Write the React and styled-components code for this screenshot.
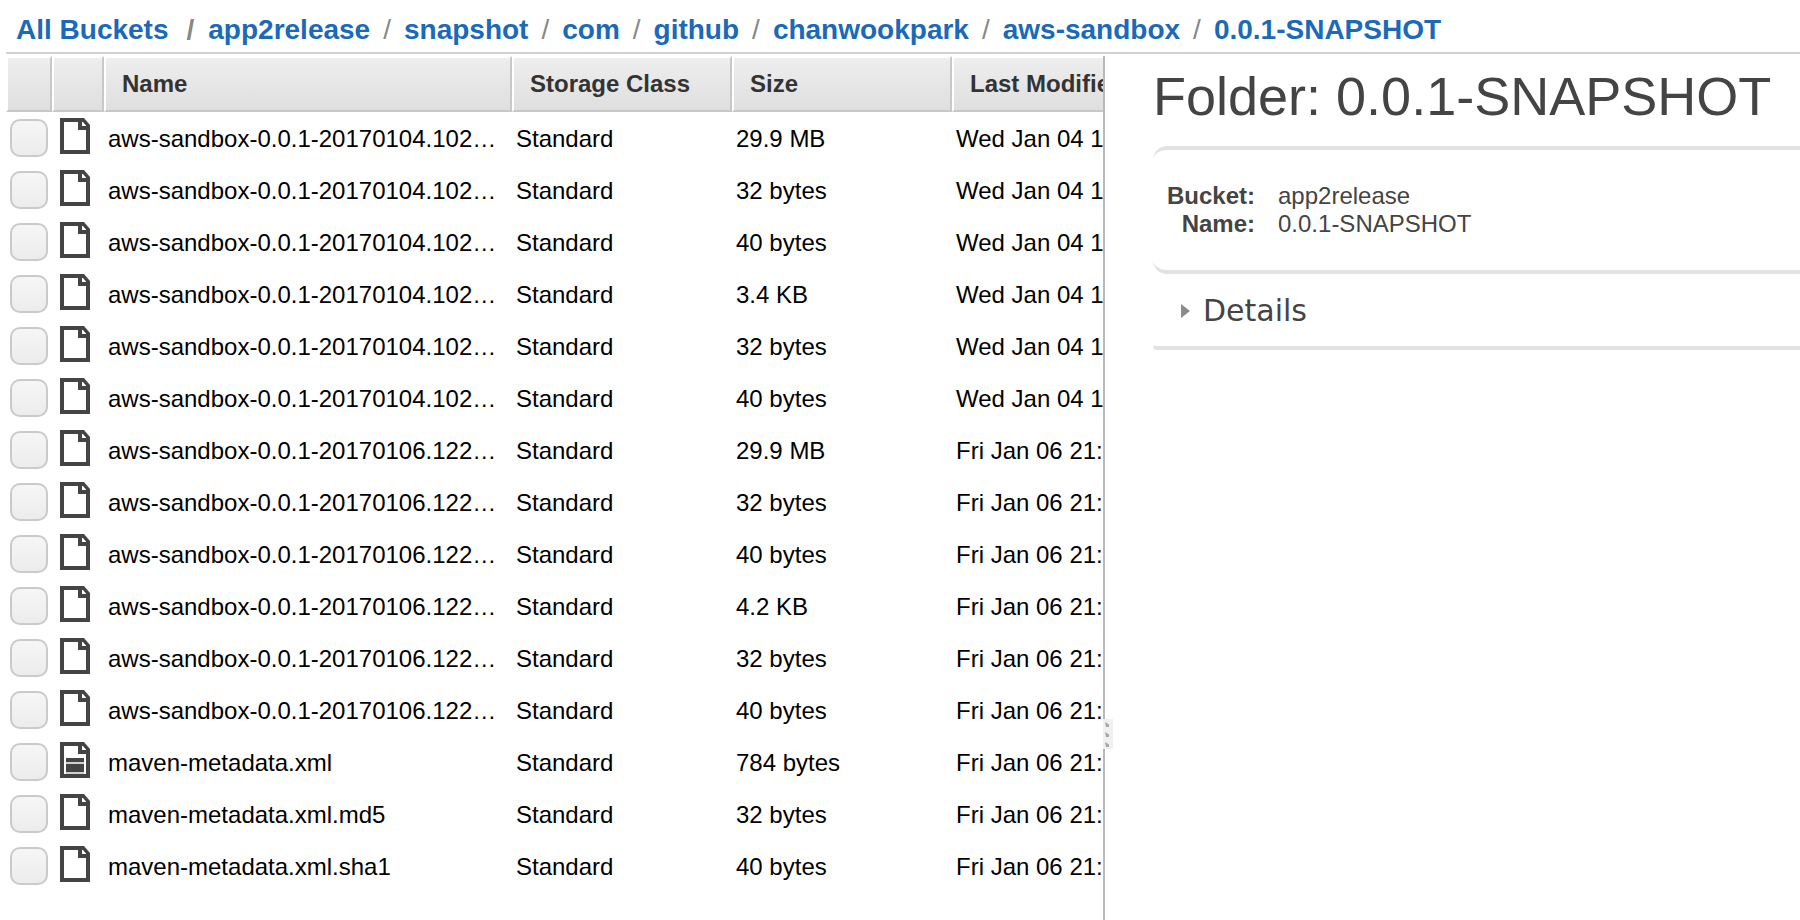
import React from "react";
import styled, { createGlobalStyle } from "styled-components";

const GlobalStyle = createGlobalStyle`
  * { box-sizing: border-box; }
  body {
    margin: 0;
    background: #fff;
    color: #444;
    font: 24px/28px "Liberation Sans", Arial, sans-serif;
  }
`;

const Page = styled.div`
  display: flex;
  flex-direction: column;
  min-height: 100vh;
`;

const Breadcrumb = styled.nav`
  margin-left: 6px;
  padding: 14px 10px 6px;
  border-bottom: 2px solid #d2d2d2;
  font-size: 28px;
  line-height: 32px;
`;

const Trail = styled.ol`
  display: flex;
  flex-wrap: wrap;
  margin: 0;
  padding: 0;
  list-style: none;
`;

const Crumb = styled.li`
  display: flex;
  white-space: nowrap;
`;

const Separator = styled.span`
  padding: 0 ${(p) => (p.$wide ? "14px 0 18px" : "13px")};
  color: #888;
  font-weight: ${(p) => (p.$wide ? "bold" : "normal")};
`;

const CrumbLink = styled.a`
  color: #1b69b9;
  font-weight: bold;
  text-decoration: none;
`;

const Panes = styled.main`
  flex: 1;
  display: grid;
  grid-template-columns: minmax(0, 1103fr) 2px minmax(0, 695fr);
  padding-top: 2px;
`;

const ListPane = styled.section`
  overflow: hidden;
  padding-left: 6px;
`;

const Splitter = styled.div`
  position: relative;
  background: #b8b8b8;
`;

const Grip = styled.div`
  position: absolute;
  top: 663px;
  left: 0;
  width: 10px;
  height: 30px;
  background: #f0f0f0;
  svg { display: block; }
`;

const Table = styled.table`
  width: 1167px;
  table-layout: fixed;
  border-collapse: separate;
  border-spacing: 0;
  color: #000;
`;

const Col = styled.col`
  width: ${(p) => p.$width}px;
`;

const Th = styled.th`
  height: 56px;
  padding: 0 16px;
  border-style: solid;
  border-width: 2px;
  border-color: #fff #c8c8c8 #c8c8c8 #fff;
  background: linear-gradient(#eee, #dfdfdf) padding-box;
  color: #333;
  text-align: left;
  white-space: nowrap;
`;

const Td = styled.td`
  height: 52px;
  padding: 2px 4px 0;
  overflow: hidden;
  text-overflow: ellipsis;
  white-space: nowrap;
`;

const ControlTd = styled.td`
  height: 52px;
  padding: 0 0 0 ${(p) => p.$left}px;
  vertical-align: top;
`;

const Checkbox = styled.input`
  appearance: none;
  display: block;
  width: 38px;
  height: 38px;
  margin: 7px 0 0;
  border: 2px solid #cacaca;
  border-radius: 10px;
  background: linear-gradient(#f6f6f6, #ececec);
`;

const IconSvg = styled.svg`
  display: block;
  width: 31px;
  height: 36px;
  margin-top: 6px;
`;

const DetailPane = styled.section`
  padding-left: 48px;
`;

const Title = styled.h1`
  margin: 0;
  padding: 9px 0 19px;
  font-size: 54px;
  font-weight: normal;
  line-height: 62px;
  white-space: nowrap;
`;

const Card = styled.div`
  padding: 32px 14px;
  border: solid #e2e2e2;
  border-width: 4px 0;
  border-radius: 14px 0 0 14px;
`;

const Facts = styled.dl`
  display: grid;
  grid-template-columns: 88px 1fr;
  column-gap: 23px;
  margin: 0;
`;

const Term = styled.dt`
  font-weight: bold;
  text-align: right;
`;

const Value = styled.dd`
  margin: 0;
`;

const DetailsBar = styled.div`
  padding: 19px 0 17px;
  border-bottom: 4px solid #e2e2e2;
  border-bottom-left-radius: 4px;
`;

const DetailsButton = styled.button`
  display: flex;
  align-items: center;
  gap: 13px;
  padding: 0 0 0 28px;
  border: 0;
  background: none;
  color: #444;
  font: 30px/36px "DejaVu Sans", sans-serif;
`;

const crumbs = ["All Buckets", "app2release", "snapshot", "com", "github", "chanwookpark", "aws-sandbox", "0.0.1-SNAPSHOT"];

const jan4 = "aws-sandbox-0.0.1-20170104.102…";
const jan6 = "aws-sandbox-0.0.1-20170106.122…";
const wed = "Wed Jan 04 19:25:34";
const fri = "Fri Jan 06 21:21:24";

const files = [
  { name: jan4, size: "29.9 MB", modified: wed },
  { name: jan4, size: "32 bytes", modified: wed },
  { name: jan4, size: "40 bytes", modified: wed },
  { name: jan4, size: "3.4 KB", modified: wed },
  { name: jan4, size: "32 bytes", modified: wed },
  { name: jan4, size: "40 bytes", modified: wed },
  { name: jan6, size: "29.9 MB", modified: fri },
  { name: jan6, size: "32 bytes", modified: fri },
  { name: jan6, size: "40 bytes", modified: fri },
  { name: jan6, size: "4.2 KB", modified: fri },
  { name: jan6, size: "32 bytes", modified: fri },
  { name: jan6, size: "40 bytes", modified: fri },
  { name: "maven-metadata.xml", size: "784 bytes", modified: fri, text: true },
  { name: "maven-metadata.xml.md5", size: "32 bytes", modified: fri },
  { name: "maven-metadata.xml.sha1", size: "40 bytes", modified: fri },
];

function FileIcon({ text }) {
  return (
    <IconSvg viewBox="0 0 31 36" aria-hidden="true">
      <path
        fill="#444"
        fillRule="evenodd"
        d="M0 0H24L30 7V36H0ZM4 4V32H26V12H18V4ZM22 4V8H26V7.500L23 4Z"
      />
      {text && (
        <>
          <path fill="#d0d0d0" d="M6 20H24V22H6ZM6 30H24V32H6Z" />
          <path fill="#444" d="M6 16H24V20H6ZM6 22H24V30H6Z" />
        </>
      )}
    </IconSvg>
  );
}

export default function App() {
  return (
    <Page>
      <GlobalStyle />
      <Breadcrumb aria-label="Breadcrumb">
        <Trail>
          {crumbs.map((c, i) => (
            <Crumb key={c}>
              {i > 0 && <Separator $wide={i === 1}>/</Separator>}
              <CrumbLink href="#">{c}</CrumbLink>
            </Crumb>
          ))}
        </Trail>
      </Breadcrumb>
      <Panes>
        <ListPane>
          <Table>
            <colgroup>
              <Col $width={46} />
              <Col $width={52} />
              <Col $width={408} />
              <Col $width={220} />
              <Col $width={220} />
              <col />
            </colgroup>
            <thead>
              <tr>
                <Th aria-label="Select" />
                <Th aria-label="Type" />
                <Th>Name</Th>
                <Th>Storage Class</Th>
                <Th>Size</Th>
                <Th>Last Modified</Th>
              </tr>
            </thead>
            <tbody>
              {files.map((f, i) => (
                <tr key={i}>
                  <ControlTd $left={4}>
                    <Checkbox type="checkbox" aria-label={f.name} />
                  </ControlTd>
                  <ControlTd $left={8}>
                    <FileIcon text={f.text} />
                  </ControlTd>
                  <Td>{f.name}</Td>
                  <Td>Standard</Td>
                  <Td>{f.size}</Td>
                  <Td>{f.modified}</Td>
                </tr>
              ))}
            </tbody>
          </Table>
        </ListPane>
        <Splitter role="separator" aria-orientation="vertical">
          <Grip>
            <svg width="10" height="30" viewBox="0 0 10 30" aria-hidden="true">
              {[0, 10, 20].map((y) => (
                <path key={y} fill="#a8a8a8" d={`M2 ${y + 3}L6 ${y + 5.5}V${y + 8}H3Z`} />
              ))}
            </svg>
          </Grip>
        </Splitter>
        <DetailPane>
          <Title>Folder: 0.0.1-SNAPSHOT</Title>
          <Card>
            <Facts>
              <Term>Bucket:</Term>
              <Value>app2release</Value>
              <Term>Name:</Term>
              <Value>0.0.1-SNAPSHOT</Value>
            </Facts>
          </Card>
          <DetailsBar>
            <DetailsButton type="button" aria-expanded="false">
              <svg width="9" height="14" viewBox="0 0 9 14" aria-hidden="true">
                <path fill="#8c8c8c" d="M0 0L9 7L0 14Z" />
              </svg>
              Details
            </DetailsButton>
          </DetailsBar>
        </DetailPane>
      </Panes>
    </Page>
  );
}
